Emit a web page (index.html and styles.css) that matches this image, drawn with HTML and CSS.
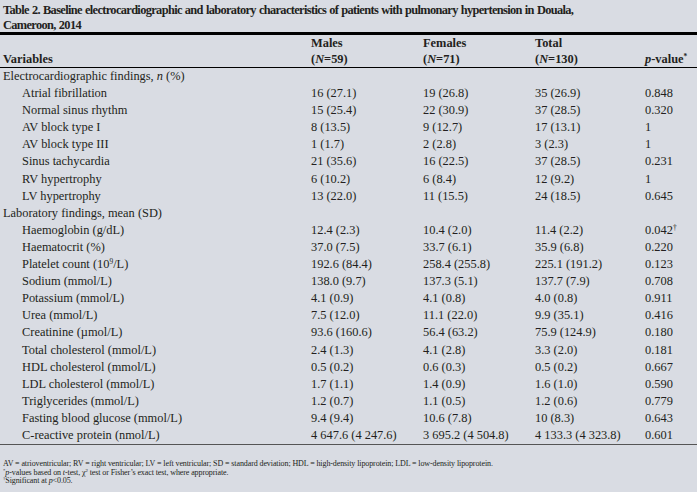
FILE: index.html
```html
<!DOCTYPE html>
<html>
<head>
<meta charset="utf-8">
<link rel="stylesheet" href="styles.css">
</head>
<body>
<div class="page">
  <h1 class="title">Table 2. Baseline electrocardiographic and laboratory characteristics of patients with pulmonary hypertension in Douala, Cameroon, 2014</h1>
  <table class="data">
    <colgroup>
      <col class="c-var"><col class="c-m"><col class="c-f"><col class="c-t"><col class="c-p">
    </colgroup>
    <thead>
      <tr class="h1">
        <th></th><th>Males</th><th>Females</th><th>Total</th><th></th>
      </tr>
      <tr class="h2">
        <th>Variables</th>
        <th>(<i>N</i>=59)</th>
        <th>(<i>N</i>=71)</th>
        <th>(<i>N</i>=130)</th>
        <th><i>p</i>-value<sup>*</sup></th>
      </tr>
    </thead>
    <tbody>
      <tr><td class="sec" colspan="5">Electrocardiographic findings, <i>n</i> (%)</td></tr>
      <tr><td class="sub">Atrial fibrillation</td><td>16 (27.1)</td><td>19 (26.8)</td><td>35 (26.9)</td><td>0.848</td></tr>
      <tr><td class="sub">Normal sinus rhythm</td><td>15 (25.4)</td><td>22 (30.9)</td><td>37 (28.5)</td><td>0.320</td></tr>
      <tr><td class="sub">AV block type I</td><td>8 (13.5)</td><td>9 (12.7)</td><td>17 (13.1)</td><td>1</td></tr>
      <tr><td class="sub">AV block type III</td><td>1 (1.7)</td><td>2 (2.8)</td><td>3 (2.3)</td><td>1</td></tr>
      <tr><td class="sub">Sinus tachycardia</td><td>21 (35.6)</td><td>16 (22.5)</td><td>37 (28.5)</td><td>0.231</td></tr>
      <tr><td class="sub">RV hypertrophy</td><td>6 (10.2)</td><td>6 (8.4)</td><td>12 (9.2)</td><td>1</td></tr>
      <tr><td class="sub">LV hypertrophy</td><td>13 (22.0)</td><td>11 (15.5)</td><td>24 (18.5)</td><td>0.645</td></tr>
      <tr><td class="sec" colspan="5">Laboratory findings, mean (SD)</td></tr>
      <tr><td class="sub">Haemoglobin (g/dL)</td><td>12.4 (2.3)</td><td>10.4 (2.0)</td><td>11.4 (2.2)</td><td>0.042<sup>†</sup></td></tr>
      <tr><td class="sub">Haematocrit (%)</td><td>37.0 (7.5)</td><td>33.7 (6.1)</td><td>35.9 (6.8)</td><td>0.220</td></tr>
      <tr><td class="sub">Platelet count (10<sup>9</sup>/L)</td><td>192.6 (84.4)</td><td>258.4 (255.8)</td><td>225.1 (191.2)</td><td>0.123</td></tr>
      <tr><td class="sub">Sodium (mmol/L)</td><td>138.0 (9.7)</td><td>137.3 (5.1)</td><td>137.7 (7.9)</td><td>0.708</td></tr>
      <tr><td class="sub">Potassium (mmol/L)</td><td>4.1 (0.9)</td><td>4.1 (0.8)</td><td>4.0 (0.8)</td><td>0.911</td></tr>
      <tr><td class="sub">Urea (mmol/L)</td><td>7.5 (12.0)</td><td>11.1 (22.0)</td><td>9.9 (35.1)</td><td>0.416</td></tr>
      <tr><td class="sub">Creatinine (µmol/L)</td><td>93.6 (160.6)</td><td>56.4 (63.2)</td><td>75.9 (124.9)</td><td>0.180</td></tr>
      <tr><td class="sub">Total cholesterol (mmol/L)</td><td>2.4 (1.3)</td><td>4.1 (2.8)</td><td>3.3 (2.0)</td><td>0.181</td></tr>
      <tr><td class="sub">HDL cholesterol (mmol/L)</td><td>0.5 (0.2)</td><td>0.6 (0.3)</td><td>0.5 (0.2)</td><td>0.667</td></tr>
      <tr><td class="sub">LDL cholesterol (mmol/L)</td><td>1.7 (1.1)</td><td>1.4 (0.9)</td><td>1.6 (1.0)</td><td>0.590</td></tr>
      <tr><td class="sub">Triglycerides (mmol/L)</td><td>1.2 (0.7)</td><td>1.1 (0.5)</td><td>1.2 (0.6)</td><td>0.779</td></tr>
      <tr><td class="sub">Fasting blood glucose (mmol/L)</td><td>9.4 (9.4)</td><td>10.6 (7.8)</td><td>10 (8.3)</td><td>0.643</td></tr>
      <tr class="last"><td class="sub">C-reactive protein (nmol/L)</td><td>4 647.6 (4 247.6)</td><td>3 695.2 (4 504.8)</td><td>4 133.3 (4 323.8)</td><td>0.601</td></tr>
    </tbody>
  </table>
  <div class="notes">
    <p>AV = atrioventricular; RV = right ventricular; LV = left ventricular; SD = standard deviation; HDL = high-density lipoprotein; LDL = low-density lipoprotein.</p>
    <p><sup>*</sup><i>p</i>-values based on <i>t</i>-test, χ<sup>2</sup> test or Fisher’s exact test, where appropriate.</p>
    <p><sup>†</sup>Significant at <i>p</i>&lt;0.05.</p>
  </div>
</div>
</body>
</html>
```

FILE: styles.css
```css
html, body {
  margin: 0;
  padding: 0;
  background: #d9dce3;
}
.page {
  width: 697px;
  height: 492px;
  background: #d9dce3;
  color: #231f20;
  font-family: "Liberation Serif", "Times New Roman", serif;
  overflow: hidden;
}
.title {
  margin: 0;
  height: 35px;
  padding: 3px 90px 0 3px;
  box-sizing: border-box;
  font-size: 12.4px;
  line-height: 14.5px;
  font-weight: bold;
  letter-spacing: -0.65px;
  word-spacing: 0.6px;
  border-bottom: 3px solid #000;
}
.data {
  width: 697px;
  border-collapse: collapse;
  table-layout: fixed;
  font-size: 12.4px;
}
.c-var { width: 308px; }
.c-m { width: 112px; }
.c-f { width: 112px; }
.c-t { width: 110px; }
.c-p { width: 55px; }
.data th {
  text-align: left;
  font-weight: bold;
  padding: 0 0 0 3px;
  height: 16px;
  line-height: 16px;
}
.data th i { font-weight: bold; }
.data thead tr.h2 th {
  border-bottom: 1.5px solid #000;
}
.data td {
  padding: 0 0 0 3px;
  height: 17.1px;
  line-height: 17.1px;
  white-space: nowrap;
}
.data td.sub { padding-left: 22px; }
.data tr.last td { border-bottom: 1px solid #555; }
sup {
  font-size: 0.6em;
  line-height: 0;
  vertical-align: 0.6em;
}
.notes {
  padding: 15px 3px 0 3px;
  font-size: 8px;
  line-height: 8.6px;
  letter-spacing: -0.1px;
}
.notes p { margin: 0; }
```
